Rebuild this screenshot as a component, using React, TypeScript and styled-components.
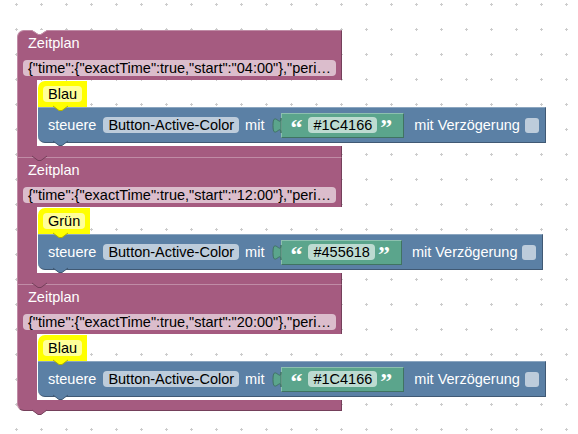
import styled, { createGlobalStyle } from 'styled-components'

const PURPLE = '#a55b80'
const PURPLE_DARK = '#743f5a'
const PURPLE_LIGHT = '#c08ca6'
const BLUE = '#5b80a5'
const BLUE_DARK = '#405974'
const BLUE_LIGHT = '#8ca6c0'
const GREEN = '#5ba58c'
const GREEN_DARK = '#407362'
const GREEN_LIGHT = '#8cc0af'
const YELLOW = '#ffff00'

const GlobalStyle = createGlobalStyle`
    html, body {
        margin: 0;
        padding: 0;
        background: #fff;
    }
    body {
        font-family: "Liberation Sans", Arial, sans-serif;
        font-size: 14.5px;
    }
`

const Workspace = styled.div`
    position: relative;
    width: 578px;
    height: 434px;
    overflow: hidden;
    background: #fff;
`

const Grid = styled.svg`
    position: absolute;
    inset: 0;
    width: 100%;
    height: 100%;
`

const Stack = styled.div`
    position: relative;
    display: flex;
    flex-direction: column;
    align-items: flex-start;
    padding: 30px 0 0 17px;
`

const Schedule = styled.div`
    position: relative;
    width: 325px;
    display: flex;
    flex-direction: column;
`

const Head = styled.div<{ $first?: boolean }>`
    box-sizing: border-box;
    height: 50px;
    padding: 4px 6px 0 5px;
    display: flex;
    flex-direction: column;
    align-items: flex-start;
    background: ${PURPLE};
    border-top: 1px solid ${PURPLE_LIGHT};
    border-left: 1px solid ${PURPLE_LIGHT};
    border-right: 1px solid ${PURPLE_DARK};
    border-top-left-radius: ${p => (p.$first ? '7px' : '0')};
`

const Title = styled.div`
    height: 16px;
    line-height: 16px;
    margin: 0 0 9px 5px;
    color: #fff;
`

const Field = styled.span`
    height: 16px;
    line-height: 16px;
    padding: 0 5px;
    border-radius: 4px;
    background: rgba(255, 255, 255, 0.6);
    color: #000;
    white-space: nowrap;
    flex-shrink: 0;
`

const Body = styled.div`
    display: flex;
    height: 66px;
`

const Arm = styled.div`
    box-sizing: border-box;
    width: 20px;
    flex-shrink: 0;
    background: ${PURPLE};
    border-left: 1px solid ${PURPLE_LIGHT};
`

const Statements = styled.div`
    display: flex;
    flex-direction: column;
    align-items: flex-start;
    padding: 1px 0 0 1px;
`

const Foot = styled.div<{ $last?: boolean }>`
    box-sizing: border-box;
    height: 11px;
    background: ${PURPLE};
    border-left: 1px solid ${PURPLE_LIGHT};
    border-right: 1px solid ${PURPLE_DARK};
    border-bottom: ${p => (p.$last ? `1px solid ${PURPLE_DARK}` : 'none')};
    border-bottom-left-radius: ${p => (p.$last ? '7px' : '0')};
`

const Tab = styled.svg`
    position: absolute;
    left: 15px;
    top: calc(100% - 1px);
    z-index: 2;
    overflow: visible;
`

const Dent = styled.svg`
    position: absolute;
    left: 15px;
    top: 0;
    z-index: 2;
`

const Comment = styled.div`
    position: relative;
    box-sizing: border-box;
    height: 26px;
    padding: 0 5px;
    display: flex;
    align-items: center;
    background: ${YELLOW};
    border-top-left-radius: 7px;
`

const Action = styled.div`
    position: relative;
    box-sizing: border-box;
    height: 36px;
    padding: 0 6px 0 10px;
    display: flex;
    align-items: center;
    background: ${BLUE};
    border-top: 1px solid ${BLUE_LIGHT};
    border-right: 1px solid ${BLUE_DARK};
    border-bottom: 1px solid ${BLUE_DARK};
    border-bottom-left-radius: 7px;
`

const Label = styled.span<{ $ml?: number }>`
    color: #fff;
    white-space: nowrap;
    margin-left: ${p => p.$ml ?? 0}px;
`

const ActionField = styled(Field)<{ $ml?: number }>`
    margin-left: ${p => p.$ml ?? 0}px;
`

const Value = styled.div`
    position: relative;
    box-sizing: border-box;
    height: 25px;
    margin-left: 17px;
    padding: 0 11px 0 8px;
    display: flex;
    align-items: center;
    background: ${GREEN};
    border-top: 1px solid ${GREEN_LIGHT};
    border-left: 1px solid ${GREEN_LIGHT};
    border-right: 1px solid ${GREEN_DARK};
    border-bottom: 1px solid ${GREEN_DARK};
`

const Plug = styled.svg`
    position: absolute;
    left: -10px;
    top: 4px;
    overflow: visible;
`

const Quote = styled.span<{ $ml?: number }>`
    width: 12px;
    height: 16px;
    margin-left: ${p => p.$ml ?? 0}px;
    font-family: "Liberation Serif", "Times New Roman", serif;
    font-weight: bold;
    font-size: 24px;
    line-height: 21px;
    color: #fff;
    text-align: center;
`

const Check = styled.span`
    width: 14px;
    height: 15px;
    margin-left: 5px;
    border-radius: 3px;
    background: rgba(255, 255, 255, 0.6);
    flex-shrink: 0;
`

const schedules = [
    { start: '04:00', name: 'Blau', color: '#1C4166' },
    { start: '12:00', name: 'Grün', color: '#455618' },
    { start: '20:00', name: 'Blau', color: '#1C4166' },
]

const NotchTab = ({ fill, stroke }: { fill: string; stroke: string }) => (
    <Tab width="15" height="5" viewBox="0 0 15 5">
        <path d="M0 0 L6 4.5 L9 4.5 L15 0 Z" fill={fill} />
        <path d="M0 0 L6 4.5 L9 4.5 L15 0" fill="none" stroke={stroke} strokeWidth="1" />
    </Tab>
)

const App = () => {
    return (
        <Workspace>
            <GlobalStyle />
            <Grid>
                <defs>
                    <pattern id="grid" x="4" y="-8" width="25" height="25" patternUnits="userSpaceOnUse">
                        <rect x="11" y="12" width="3" height="1" fill="#cccccc" />
                        <rect x="12" y="11" width="1" height="3" fill="#cccccc" />
                    </pattern>
                </defs>
                <rect width="100%" height="100%" fill="url(#grid)" />
            </Grid>
            <Stack>
                {schedules.map((s, index) => {
                    const first = index === 0
                    const last = index === schedules.length - 1
                    return (
                        <Schedule key={index}>
                            {first && (
                                <Dent width="15" height="5" viewBox="0 0 15 5">
                                    <path d="M0 0 L6 4 L9 4 L15 0 Z" fill="#fff" />
                                    <path d="M0 0.5 L6 4.5 L9 4.5 L15 0.5" fill="none" stroke={PURPLE_LIGHT} />
                                </Dent>
                            )}
                            <Head $first={first}>
                                <Title>Zeitplan</Title>
                                <Field>
                                    {`{"time":{"exactTime":true,"start":"${s.start}"},"peri…`}
                                </Field>
                            </Head>
                            <Body>
                                <Arm />
                                <Statements>
                                    <Comment>
                                        <Field>{s.name}</Field>
                                        <NotchTab fill={YELLOW} stroke="#b2b200" />
                                    </Comment>
                                    <Action>
                                        <Label>steuere</Label>
                                        <ActionField $ml={7}>Button-Active-Color</ActionField>
                                        <Label $ml={6}>mit</Label>
                                        <Value>
                                            <Plug width="9" height="16" viewBox="0 0 9 16">
                                                <path
                                                    d="M9 0 C9 10 1 -8 1 7.5 S9 5 9 15 Z"
                                                    fill={GREEN}
                                                    stroke={GREEN_DARK}
                                                    strokeWidth="1"
                                                />
                                            </Plug>
                                            <Quote>“</Quote>
                                            <ActionField $ml={6}>{s.color}</ActionField>
                                            <Quote $ml={3}>”</Quote>
                                        </Value>
                                        <Label $ml={10}>mit Verzögerung</Label>
                                        <Check />
                                        <NotchTab fill={BLUE} stroke={BLUE_DARK} />
                                    </Action>
                                </Statements>
                            </Body>
                            <Foot $last={last} />
                            <NotchTab fill={PURPLE} stroke={PURPLE_DARK} />
                        </Schedule>
                    )
                })}
            </Stack>
        </Workspace>
    )
}

export default App
